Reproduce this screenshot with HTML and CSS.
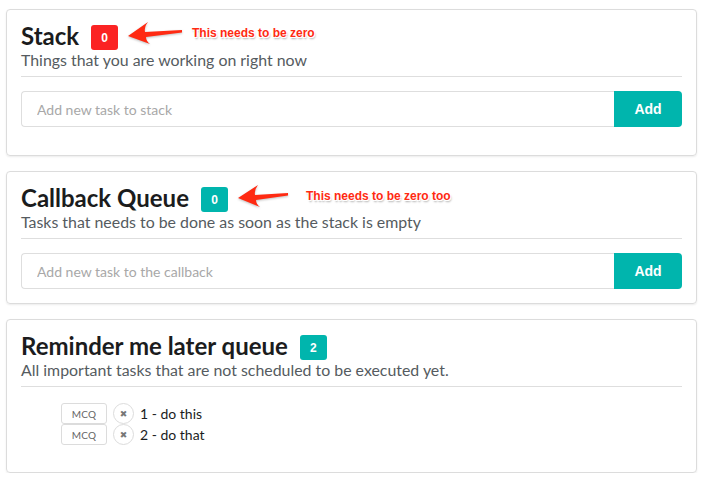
FILE: index.html
```html
<!DOCTYPE html>
<html>
<head>
<meta charset="utf-8">
<link rel="stylesheet" href="styles.css">
</head>
<body>
<div class="page">
  <section class="panel panel--tall">
    <div class="title-row">
      <h2 class="title">Stack</h2>
      <span class="badge badge--red">0</span>
    </div>
    <p class="subtitle">Things that you are working on right now</p>
    <form class="add-form">
      <input class="add-input" type="text" placeholder="Add new task to stack">
      <button class="add-btn" type="button">Add</button>
    </form>
    <div class="annotation annotation--one">
      <svg class="arrow" width="54" height="22" viewBox="0 0 54 22"><path d="M0 14 L20 0 Q16 5 17 10 L54 8 L54 10.5 L18 15 Q18 19 22 22 Z" fill="#ff2a12"/></svg>
      <span class="note">This needs to be zero</span>
    </div>
  </section>

  <section class="panel">
    <div class="title-row">
      <h2 class="title">Callback Queue</h2>
      <span class="badge badge--teal">0</span>
    </div>
    <p class="subtitle">Tasks that needs to be done as soon as the stack is empty</p>
    <form class="add-form">
      <input class="add-input" type="text" placeholder="Add new task to the callback">
      <button class="add-btn" type="button">Add</button>
    </form>
    <div class="annotation annotation--two">
      <svg class="arrow" width="50" height="22" viewBox="0 0 50 22"><path d="M0 13 L20 0 Q16 5 17 10 L50 8 L50 10.5 L18 15 Q18 19 22 22 Z" fill="#ff2a12"/></svg>
      <span class="note">This needs to be zero too</span>
    </div>
  </section>

  <section class="panel">
    <div class="title-row">
      <h2 class="title">Reminder me later queue</h2>
      <span class="badge badge--teal">2</span>
    </div>
    <p class="subtitle subtitle--list">All important tasks that are not scheduled to be executed yet.</p>
    <ul class="task-list">
      <li class="task">
        <span class="tag">MCQ</span>
        <span class="remove">&#x2716;</span>
        <span class="task-text">1 - do this</span>
      </li>
      <li class="task">
        <span class="tag">MCQ</span>
        <span class="remove">&#x2716;</span>
        <span class="task-text">2 - do that</span>
      </li>
    </ul>
  </section>
</div>
</body>
</html>
```

FILE: styles.css
```css
* { box-sizing: border-box; }

html, body {
  margin: 0;
  padding: 0;
  background: #fff;
}

body {
  font-family: Lato, "Open Sans", sans-serif;
  color: #222;
}

.page {
  display: flex;
  flex-direction: column;
  gap: 15px;
  padding: 9px 8px 0 6px;
}

.panel {
  position: relative;
  border: 1px solid #dcdcdc;
  border-radius: 4px;
  box-shadow: 0 1px 2px rgba(0, 0, 0, 0.08);
  padding: 11px 14px 14px;
}

.panel--tall {
  padding-bottom: 28px;
}

.title-row {
  display: flex;
  align-items: flex-end;
  gap: 12px;
}

.title {
  margin: 0;
  font-size: 24px;
  font-weight: 700;
  line-height: 29px;
  color: #1b1c1d;
}

.badge {
  display: inline-flex;
  align-items: center;
  justify-content: center;
  width: 27px;
  height: 25px;
  border-radius: 3px;
  color: #fff;
  font-size: 12px;
  font-weight: 700;
  font-family: "Liberation Sans", Arial, sans-serif;
}

.badge--red { background: #fb2323; }
.badge--teal { background: #00b5ad; }

.subtitle {
  margin: 0;
  font-size: 15.9px;
  line-height: 20px;
  color: #555b60;
  padding-bottom: 6px;
  border-bottom: 1px solid #dedede;
}

.add-form {
  display: flex;
  margin: 14px 0 0;
  height: 36px;
}

.add-input {
  flex: 1;
  min-width: 0;
  height: 36px;
  border: 1px solid #dedede;
  border-right: none;
  border-radius: 4px 0 0 4px;
  padding: 0 15px;
  font-family: Lato, sans-serif;
  font-size: 14px;
  color: #333;
  outline: none;
}

.add-input::placeholder {
  color: #a8a8a8;
}

.add-btn {
  width: 68px;
  height: 36px;
  border: none;
  border-radius: 0 4px 4px 0;
  background: #00b5ad;
  color: #fff;
  font-family: "Liberation Sans", Arial, sans-serif;
  font-size: 14px;
  font-weight: 700;
  padding: 0;
}

.annotation {
  position: absolute;
  display: flex;
  align-items: center;
  gap: 10px;
}

.annotation--one { left: 121px; top: 12px; }
.annotation--two { left: 231px; top: 13px; gap: 18px; }

.arrow {
  display: block;
  filter: drop-shadow(0 1px 1px rgba(0, 0, 0, 0.25));
}

.note {
  font-family: "Liberation Sans", Arial, sans-serif;
  font-size: 12px;
  font-weight: 700;
  line-height: 14px;
  color: #ff2a12;
  text-shadow: 0 0 1px #fff, 1px 1px 0 #fff, -1px -1px 0 #fff, 1px -1px 0 #fff, -1px 1px 0 #fff, 1px 2px 2px rgba(0, 0, 0, 0.35);
}

.task-list {
  list-style: none;
  margin: 16px 0 13px;
  padding: 0 0 0 40px;
}

.task {
  display: flex;
  align-items: center;
  height: 21px;
  gap: 6px;
}

.tag {
  display: inline-flex;
  align-items: center;
  justify-content: center;
  width: 46px;
  height: 21px;
  border: 1px solid #dcdcdc;
  border-radius: 3px;
  font-size: 10px;
  color: #666;
  letter-spacing: 0.3px;
}

.remove {
  display: inline-flex;
  align-items: center;
  justify-content: center;
  width: 21px;
  height: 21px;
  border: 1px solid #dcdcdc;
  border-radius: 50%;
  font-size: 9px;
  color: #777;
  font-family: "DejaVu Sans", sans-serif;
}

.task-text {
  font-size: 14px;
  color: #1b1c1d;
}
```
